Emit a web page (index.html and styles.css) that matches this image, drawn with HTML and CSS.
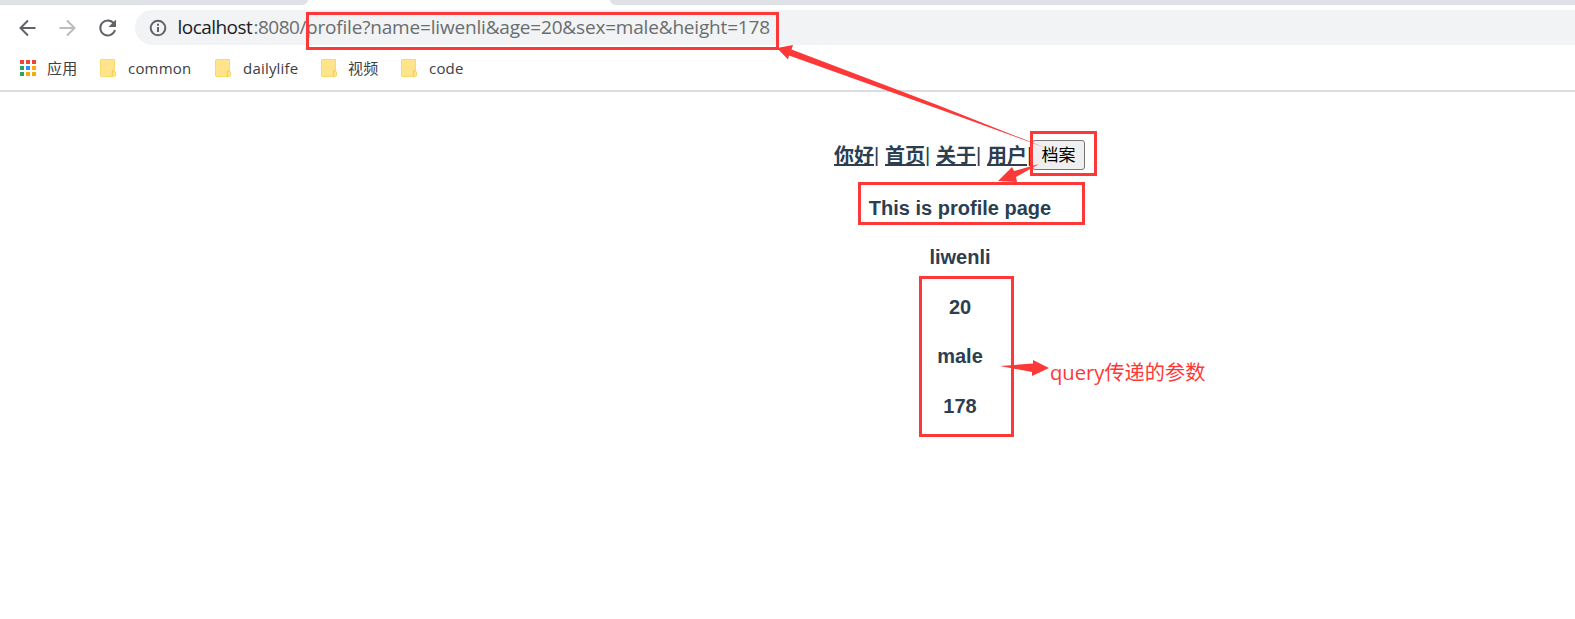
FILE: index.html
```html
<!DOCTYPE html>
<html lang="zh-CN">
<head>
<meta charset="utf-8">
<title>profile</title>
<link rel="stylesheet" href="styles.css">
</head>
<body>
<header class="browser">
  <div class="tabstrip"><div class="tab-left"></div><div class="tab-right"></div></div>
  <div class="toolbar">
    <svg class="nav-icon" viewBox="0 0 20 20"><path d="M17.500 10H3M10 2.500L2.500 10l7.500 7.500" /></svg>
    <svg class="nav-icon disabled" viewBox="0 0 20 20"><path d="M1.500 10h15M9 2.500L16.500 10 9 17.500" /></svg>
    <svg class="nav-icon" viewBox="0 0 20 20"><path d="M15.700 5.300A7.500 7.500 0 1 0 17 12" /><path class="solid" d="M18 1.500v7.500h-7.500z" /></svg>
    <div class="address">
      <svg class="info" viewBox="0 0 18 18"><circle cx="9" cy="9" r="7.300"/><path d="M9 8v5M9 4.800v2"/></svg>
      <span class="url"><span class="host">localhost</span><span class="path">:8080/</span><span class="query">profile?name=liwenli&amp;age=20&amp;sex=male&amp;height=178</span></span>
    </div>
  </div>
  <nav class="bookmarks">
    <span class="bookmark apps"><svg class="grid" viewBox="0 0 16 16"><path fill="#f04438" d="M0 0h4v4H0zM6 0h4v4H6zM12 0h4v4h-4z"/><path fill="#2ba65a" d="M0 6h4v4H0zM0 12h4v4H0z"/><path fill="#2196f3" d="M6 6h4v4H6z"/><path fill="#fbaa0b" d="M12 6h4v4h-4zM6 12h4v4H6zM12 12h4v4h-4z"/></svg><span class="han">应用</span></span>
    <span class="bookmark common"><svg class="folder" viewBox="0 0 16 18"><path d="M1 .5h13.500V12l1 1v4l-1 .5H1l-.5-.5V1z"/><path class="fold" d="M14 12h-1.500l-.5 5.500"/></svg><span>common</span></span>
    <span class="bookmark daily"><svg class="folder" viewBox="0 0 16 18"><path d="M1 .5h13.500V12l1 1v4l-1 .5H1l-.5-.5V1z"/><path class="fold" d="M14 12h-1.500l-.5 5.500"/></svg><span>dailylife</span></span>
    <span class="bookmark video"><svg class="folder" viewBox="0 0 16 18"><path d="M1 .5h13.500V12l1 1v4l-1 .5H1l-.5-.5V1z"/><path class="fold" d="M14 12h-1.500l-.5 5.500"/></svg><span class="han">视频</span></span>
    <span class="bookmark code"><svg class="folder" viewBox="0 0 16 18"><path d="M1 .5h13.500V12l1 1v4l-1 .5H1l-.5-.5V1z"/><path class="fold" d="M14 12h-1.500l-.5 5.500"/></svg><span>code</span></span>
  </nav>
</header>
<main class="page">
  <div class="links"><a>你好</a><i>|</i><a>首页</a><i>|</i><a>关于</a><i>|</i><a>用户</a><i class="last">|</i><button>档案</button></div>
  <p class="line">This is profile page</p>
  <p class="line">liwenli</p>
  <p class="line">20</p>
  <p class="line">male</p>
  <p class="line">178</p>
</main>
<svg class="marks" viewBox="0 0 1575 619">
  <g class="boxes">
    <rect x="307.500" y="13.500" width="470" height="35"/>
    <rect x="1031.500" y="132.500" width="64" height="42"/>
    <rect x="859.500" y="183.500" width="224" height="40"/>
    <rect x="920.500" y="277.500" width="92" height="158"/>
  </g>
  <path d="M777 48L793 45 791.500 49.500 940 106 1046 148 940 109.500 789 55.500 788 59.500z"/>
  <path d="M998 181L1012 167 1014 171 1039 164 1016 177 1017 182z"/>
  <path d="M1000 366L1033 363.500 1033 360 1049 368 1032 376 1032 372z"/>
</svg>
<span class="note">query传递的参数</span>
</body>
</html>
```
FILE: styles.css
```css
body { margin: 0; position: relative; width: 1575px; height: 619px; overflow: hidden; background: #fff; font-family: "Open Sans", "Noto Sans CJK SC", sans-serif; }
.browser { height: 92px; box-sizing: border-box; border-bottom: 2px solid #dadce0; }
.tabstrip { display: flex; justify-content: space-between; height: 5px; }
.tab-left, .tab-right { background: #dee1e6; }
.tab-left { width: 308px; border-bottom-right-radius: 6px 5px; }
.tab-right { width: 965px; border-bottom-left-radius: 6px 5px; }
.toolbar { display: flex; align-items: center; height: 45px; padding-left: 18px; }
.nav-icon { width: 20px; height: 20px; margin-right: 20px; fill: none; stroke: #5f6368; stroke-width: 2; flex: none; }
.nav-icon.disabled { stroke: #babcbe; }
.nav-icon .solid { fill: #5f6368; stroke: none; }
.address { display: flex; align-items: center; flex: 1; height: 35px; margin-left: -3px; border-radius: 18px 0 0 18px; background: #f1f3f4; }
.info { width: 18px; height: 18px; margin: 0 11px 0 13.500px; fill: none; stroke: #5f6368; stroke-width: 2; flex: none; }
.url { display: flex; font-size: 19px; line-height: 35px; white-space: pre; color: #6a6d70; }
.host { width: 76px; color: #202124; letter-spacing: -.55px; }
.path { width: 52.500px; letter-spacing: -.5px; }
.query { letter-spacing: -.18px; }
.bookmarks { display: flex; height: 40px; padding-left: 20px; align-items: center; font-size: 15px; color: #3c4043; }
.bookmark { display: flex; align-items: center; height: 40px; padding-bottom: 4px; letter-spacing: .2px; }
.han { padding-bottom: 2px; margin-left: -1px; }
.apps { width: 80px; }
.common { width: 115px; }
.daily { width: 106px; }
.video { width: 80px; }
.grid { width: 16px; height: 16px; margin-right: 12px; }
.folder { width: 16px; height: 18px; margin-right: 12px; fill: #ffe48c; stroke: #f9da68; }
.folder .fold { fill: none; stroke: #f2c94a; }
.page { box-sizing: border-box; width: 1575px; padding: 47px 0 0 345px; text-align: center; color: #2c3e50; font-family: "Liberation Sans", "Noto Sans CJK SC", sans-serif; font-size: 20px; }
.links { display: flex; justify-content: center; align-items: center; height: 31px; }
.links a { font-weight: bold; text-decoration: underline; text-underline-offset: 1px; line-height: 31px; padding-top: 3px; }
.links i { width: 11px; padding-top: 2px; text-align: left; font-style: normal; }
.links .last { width: 5px; }
.links button { width: 53px; height: 30px; margin-right: 1px; padding: 0 0 2px; border: 1px solid #767676; border-radius: 3px; background: #efefef; color: #000; font: 17px "Liberation Sans", "Noto Sans CJK SC", sans-serif; }
.line { margin: 0; padding-top: 26.600px; font-weight: bold; line-height: 23px; }
.marks { position: absolute; left: 0; top: 0; width: 1575px; height: 619px; fill: #fd3838; }
.boxes { fill: none; stroke: #fd3838; stroke-width: 3; }
.note { position: absolute; left: 1050px; top: 357px; font: 20.200px/30px "Open Sans", "Noto Sans CJK SC", sans-serif; color: #fd3838; white-space: nowrap; }
```
